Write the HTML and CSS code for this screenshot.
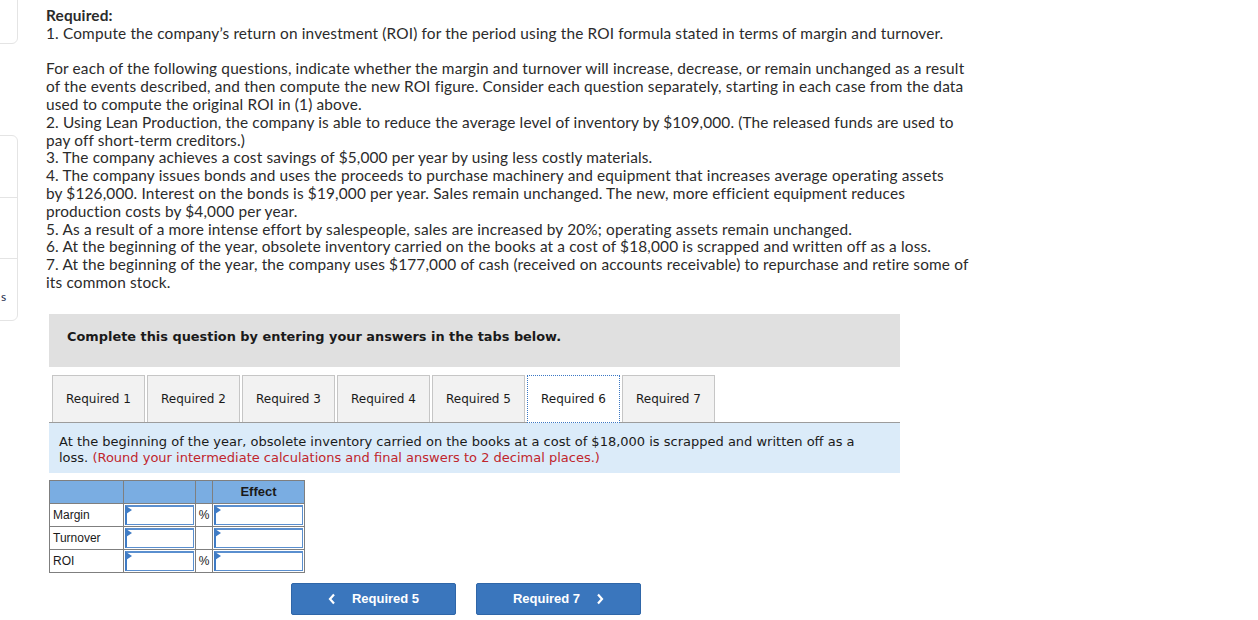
FILE: index.html
```html
<!DOCTYPE html>
<html>
<head>
<meta charset="utf-8">
<link rel="stylesheet" href="styles.css">
</head>
<body>
<div class="page">
  <aside class="rail">
    <div class="card card-top"></div>
    <div class="card card-list">
      <div class="item"></div>
      <div class="item"></div>
      <div class="item item-last"><span class="rail-text">s</span></div>
    </div>
  </aside>
  <main class="main">
    <div class="problem">
      <p class="lead"><strong>Required:</strong><br>1. Compute the company’s return on investment (ROI) for the period using the ROI formula stated in terms of margin and turnover.</p>
      <p>For each of the following questions, indicate whether the margin and turnover will increase, decrease, or remain unchanged as a result<br>of the events described, and then compute the new ROI figure. Consider each question separately, starting in each case from the data<br>used to compute the original ROI in (1) above.<br>2. Using Lean Production, the company is able to reduce the average level of inventory by $109,000. (The released funds are used to<br>pay off short-term creditors.)<br>3. The company achieves a cost savings of $5,000 per year by using less costly materials.<br>4. The company issues bonds and uses the proceeds to purchase machinery and equipment that increases average operating assets<br>by $126,000. Interest on the bonds is $19,000 per year. Sales remain unchanged. The new, more efficient equipment reduces<br>production costs by $4,000 per year.<br>5. As a result of a more intense effort by salespeople, sales are increased by 20%; operating assets remain unchanged.<br>6. At the beginning of the year, obsolete inventory carried on the books at a cost of $18,000 is scrapped and written off as a loss.<br>7. At the beginning of the year, the company uses $177,000 of cash (received on accounts receivable) to repurchase and retire some of<br>its common stock.</p>
    </div>
    <section class="question">
      <div class="instr">Complete this question by entering your answers in the tabs below.</div>
      <div class="tabs">
        <div class="tab">Required 1</div>
        <div class="tab">Required 2</div>
        <div class="tab">Required 3</div>
        <div class="tab">Required 4</div>
        <div class="tab">Required 5</div>
        <div class="tab tab-active">Required 6</div>
        <div class="tab">Required 7</div>
      </div>
      <div class="panel">At the beginning of the year, obsolete inventory carried on the books at a cost of $18,000 is scrapped and written off as a<br>loss. <span class="note">(Round your intermediate calculations and final answers to 2 decimal places.)</span></div>
      <table class="grid">
        <tr class="head">
          <th class="c1"></th><th class="c2"></th><th class="c3"></th><th class="c4">Effect</th>
        </tr>
        <tr>
          <td class="label">Margin</td>
          <td class="cell"><div class="field"></div></td>
          <td class="pct">%</td>
          <td class="cell"><div class="field"></div></td>
        </tr>
        <tr>
          <td class="label">Turnover</td>
          <td class="cell"><div class="field"></div></td>
          <td class="pct"></td>
          <td class="cell"><div class="field"></div></td>
        </tr>
        <tr>
          <td class="label">ROI</td>
          <td class="cell"><div class="field"></div></td>
          <td class="pct">%</td>
          <td class="cell"><div class="field"></div></td>
        </tr>
      </table>
      <div class="nav">
        <button class="btn"><svg class="chev" width="8" height="12" viewBox="0 0 8 12"><path d="M6 1.5 L2 6 L6 10.5" fill="none" stroke="#fff" stroke-width="2.2"/></svg><span>Required 5</span></button>
        <button class="btn"><span>Required 7</span><svg class="chev" width="8" height="12" viewBox="0 0 8 12"><path d="M2 1.5 L6 6 L2 10.5" fill="none" stroke="#fff" stroke-width="2.2"/></svg></button>
      </div>
    </section>
  </main>
</div>
</body>
</html>
```

FILE: styles.css
```css
html, body {
  margin: 0;
  padding: 0;
  background: #fff;
}

.page {
  display: flex;
  align-items: flex-start;
  width: 1258px;
  height: 620px;
  overflow: hidden;
}

.rail {
  width: 18px;
  flex: none;
  overflow: hidden;
}

.card {
  box-sizing: border-box;
  width: 30px;
  margin-left: -12px;
  border: 1px solid #e4e4e4;
  border-radius: 6px;
  background: #fff;
}

.card-top {
  margin-top: -10px;
  height: 54px;
}

.card-list {
  margin-top: 91px;
  height: 186px;
  display: flex;
  flex-direction: column;
}

.item {
  flex: 1;
  border-bottom: 1px solid #e4e4e4;
  display: flex;
  align-items: flex-end;
  padding-bottom: 17px;
}

.item-last {
  border-bottom: none;
}

.rail-text {
  font-family: "Lato", sans-serif;
  font-size: 12px;
  color: #1b2a4a;
  margin-left: 12px;
  line-height: 12px;
}

.main {
  margin-left: 28px;
  flex: 1;
}

.problem {
  padding-top: 7px;
  font-family: "Lato", "Liberation Sans", sans-serif;
  font-size: 15.4px;
  letter-spacing: 0.15px;
  line-height: 17.8px;
  color: #2b2b2b;
  white-space: nowrap;
}

.problem p {
  margin: 0;
}

.problem .lead {
  margin-bottom: 17.8px;
}

.problem strong {
  font-weight: 700;
}

.question {
  margin-top: 22px;
  margin-left: 3px;
  width: 851px;
}

.instr {
  box-sizing: border-box;
  height: 53px;
  background: #e0e0e0;
  display: flex;
  align-items: center;
  padding-left: 18px;
  padding-bottom: 8px;
  font-family: "DejaVu Sans", Verdana, sans-serif;
  font-weight: bold;
  font-size: 12.9px;
  color: #1a1a1a;
}

.tabs {
  margin-top: 8px;
  padding-left: 3px;
  display: flex;
  gap: 2px;
  border-bottom: 1px solid #9c9c9c;
}

.tab {
  box-sizing: border-box;
  width: 93px;
  height: 47px;
  background: #f2f2f2;
  border: 1px solid #c6c6c6;
  border-bottom: none;
  display: flex;
  align-items: center;
  justify-content: center;
  font-family: "DejaVu Sans", Verdana, sans-serif;
  font-size: 12px;
  color: #1a1a1a;
}

.tab-active {
  background: #fff;
  border: 1px dotted #3b78c4;
  margin-bottom: -1px;
  height: 48px;
}

.panel {
  height: 50px;
  box-sizing: border-box;
  background: #dbebf9;
  padding: 11px 10px 0;
  font-family: "DejaVu Sans", Verdana, sans-serif;
  font-size: 13px;
  line-height: 16.5px;
  color: #1a1a1a;
  white-space: nowrap;
}

.note {
  color: #c0262d;
}

.grid {
  margin-top: 7px;
  border-collapse: collapse;
  font-family: "Liberation Sans", Arial, sans-serif;
  font-size: 12px;
  color: #1a1a1a;
}

.grid th, .grid td {
  border: 1px solid #7f7f7f;
  padding: 0;
  height: 22px;
}

.grid .head th {
  background: #7aade2;
  font-weight: bold;
  font-size: 13px;
  color: #1a1a1a;
}

.c1 { width: 73px; }
.c2 { width: 71px; }
.c3 { width: 16px; }
.c4 { width: 91px; }

.label {
  padding-left: 3px !important;
  text-align: left;
}

.pct {
  text-align: center;
  font-size: 12px;
}

.cell {
  position: relative;
}

.field {
  position: relative;
  box-sizing: border-box;
  height: 20px;
  margin: 0 1px;
  border-style: solid;
  border-width: 2px 1px 1px 2px;
  border-color: #5a8fcf #5a8fcf #5a8fcf #3f7bc4;
  background: #fff;
}

.field::before {
  content: "";
  position: absolute;
  left: -1px;
  top: -1px;
  width: 0;
  height: 0;
  border-top: 4px solid transparent;
  border-bottom: 4px solid transparent;
  border-left: 6px solid #3f7bc4;
}

.nav {
  margin-top: 10px;
  padding-left: 242px;
  display: flex;
  gap: 20px;
}

.btn {
  box-sizing: border-box;
  width: 165px;
  height: 32px;
  background: #3a76bd;
  border: 1px solid #2f66a8;
  border-radius: 2px;
  color: #fff;
  font-family: "Liberation Sans", Arial, sans-serif;
  font-weight: bold;
  font-size: 13px;
  display: flex;
  align-items: center;
  justify-content: center;
  gap: 16px;
  padding: 0;
}

.chev {
  display: block;
}
```
